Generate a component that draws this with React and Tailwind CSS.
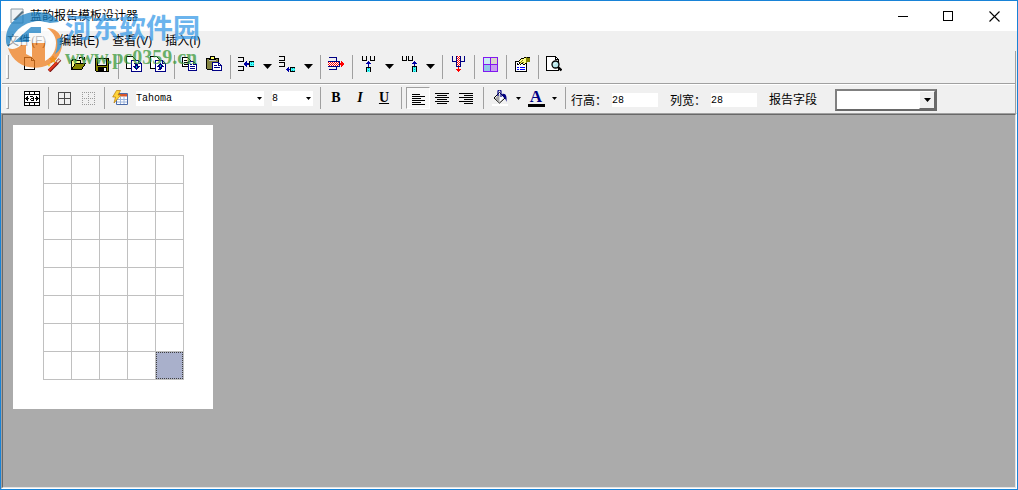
import { useState } from 'react';

function Svg({ children, smooth }) {
  return (
    <svg
      className="w-4 h-4 shrink-0"
      viewBox="0 0 16 16"
      fill="none"
      shapeRendering={smooth ? 'auto' : 'crispEdges'}
      aria-hidden="true"
    >
      {children}
    </svg>
  );
}

const icons = {
  new: (
    <Svg>
      <path d="M2.500 1.500h7l3 3v9h-10z" fill="#fff" stroke="#000" />
      <path d="M9.500 1.500v3h3" stroke="#000" />
    </Svg>
  ),
  wizard: (
    <Svg smooth>
      <path d="M3 15l8.500-8.500" stroke="#7b1010" strokeWidth="3.600" />
      <path d="M3 14.500l8-8" stroke="#e63a1e" strokeWidth="2.200" />
      <path d="M11 6.500l3-3" stroke="#7b1010" strokeWidth="3.600" />
      <path d="M11 6.300l2.700-2.700" stroke="#f8d8c0" strokeWidth="2" />
      <path d="M7 0l1 2.200 2.500.3-1.800 1.700.4 2.500L7 5.500 4.800 6.700l.4-2.500L3.500 2.500 6 2.200z" fill="#ffc20e" stroke="#d98a00" strokeWidth=".5" />
      <path d="M3 7l.6 1.400L5 9l-1.400.6L3 11l-.6-1.400L1 9l1.400-.6z" fill="#ffc20e" />
    </Svg>
  ),
  open: (
    <Svg>
      <path d="M1.500 13.500v-9h1v-1h3v1h5v3h-5l-4 6" fill="#ffff9c" stroke="#000" />
      <path d="M1.500 13.500l4-6h10l-4 6z" fill="#848400" stroke="#000" />
      <path d="M9.500 2.500v-1h3v1h1v1h1M14.500 1v3M12 3.500h3" stroke="#000" />
    </Svg>
  ),
  save: (
    <Svg>
      <path d="M1.500 2.500h13v13h-12l-1-1z" fill="#848400" stroke="#000" />
      <path d="M4 3h8v6H4z" fill="#f0f0f0" />
      <path d="M3.500 3v6.500h9V3" stroke="#000" />
      <path d="M4 11h9v4H4z" fill="#000" />
      <path d="M10 12h2v3h-2z" fill="#fff" />
    </Svg>
  ),
  load: (
    <Svg>
      <path d="M.5.5h6l3 3v9h-9z" fill="#fff" stroke="#000" />
      <path d="M5.500 4.500h7l3 3v8h-10z" fill="#fff" stroke="#000084" />
      <path d="M12.500 4.500v3h3" stroke="#000084" />
      <path d="M8 7h3v1h1v2h2v1h-1v1h-1v1h-1v1h-1v-1H9v-1H8v-1H7v-1h2V8H8z" fill="#000084" />
      <path d="M10 10h1v2h-1z" fill="#00c6c6" />
    </Svg>
  ),
  store: (
    <Svg>
      <path d="M.5.5h6l3 3v9h-9z" fill="#fff" stroke="#000" />
      <path d="M5.500 4.500h7l3 3v8h-10z" fill="#fff" stroke="#000084" />
      <path d="M12.500 4.500v3h3" stroke="#000084" />
      <path d="M10 7h1v1h1v1h1v1h1v1h-2v2h-1v1H8v-1h1v-2H7v-1h1V9h1V8h1z" fill="#000084" />
      <path d="M10 9h1v2h-1z" fill="#00c6c6" />
    </Svg>
  ),
  copy: (
    <Svg>
      <path d="M.5 1.500h5l3 3v6h-8z" fill="#fff" stroke="#000" />
      <path d="M2 4.500h3M2 6.500h4M2 8.500h4" stroke="#000" />
      <path d="M6.500 5.500h5l3 3v6h-8z" fill="#fff" stroke="#000084" />
      <path d="M11.500 5.500v3h3M8 8.500h2M8 10.500h5M8 12.500h5" stroke="#000084" />
    </Svg>
  ),
  paste: (
    <Svg>
      <path d="M.5 2.500h12v11H1.500l-1-1z" fill="#848442" stroke="#000" />
      <path d="M3.500 3.500v-1h1v-2h4v2h1v1z" fill="#ffff63" stroke="#000" />
      <path d="M3 4.500h7" stroke="#c6c6c6" />
      <path d="M6.500 6.500h6l3 3v5h-9z" fill="#fff" stroke="#000084" />
      <path d="M12.500 6.500v3h3M8 9.500h3M8 11.500h6" stroke="#000084" />
    </Svg>
  ),
  rowBefore: (
    <Svg>
      <path d="M0 1.500h5.500v4H0M0 10.500h5.500v4H0" stroke="#000" />
      <path d="M7 8h4" stroke="#0000a5" strokeWidth="2" />
      <path d="M6 7h1V6h1V5h1v6H8v-1H7V9H6z" fill="#0000a5" />
      <path d="M12 6h4v4h-4z" fill="#4ff" />
      <path d="M16 5.500h-4.500v5H16" stroke="#000" />
      <path d="M13.500 6v4M15.500 6v4" stroke="#00b0b0" strokeDasharray="1 1" />
    </Svg>
  ),
  rowAfter: (
    <Svg>
      <path d="M0 .5h5.500v4H0M0 6.500h5.500v4H0" stroke="#000" />
      <path d="M8 13.500h3" stroke="#0000a5" strokeWidth="1" />
      <path d="M7 13h1v-1h1v-1h1v5H9v-1H8v-1H7z" fill="#0000a5" />
      <path d="M12 12h4v3h-4z" fill="#4ff" />
      <path d="M16 11.500h-4.500v4H16" stroke="#000" />
      <path d="M13.500 12v3M15.500 12v3" stroke="#00b0b0" strokeDasharray="1 1" />
    </Svg>
  ),
  rowDelete: (
    <Svg>
      <path d="M1 1.500h7.500V5M1 13.500h7.500V11" stroke="#000084" />
      <path d="M0 6h11v4H0z" fill="#fff" />
      <path d="M0 6.500h11M0 8.500h11" stroke="#f00" strokeDasharray="1 1" />
      <path d="M1 7.500h10M1 9.500h10" stroke="#f00" strokeDasharray="1 1" />
      <path d="M0 5.500h11.500v5H0" stroke="#000084" />
      <path d="M12 7h1V5h1v1h1v1h1v2h-1v1h-1v1h-1V9h-1z" fill="#f00" />
    </Svg>
  ),
  colBefore: (
    <Svg>
      <path d="M2.500 0v4.500h4V0M10.500 0v4.500h4V0" stroke="#000" />
      <path d="M8 5h1v1h1v1h1v1H9v3H8V8H6V7h1V6h1z" fill="#0000a5" />
      <path d="M7 12h3v4H7z" fill="#4ff" />
      <path d="M6.500 16v-4.500h4V16" stroke="#000" />
      <path d="M8.500 12v4" stroke="#00b0b0" strokeDasharray="1 1" />
    </Svg>
  ),
  colAfter: (
    <Svg>
      <path d="M1.500 0v4.500h4V0M7.500 0v4.500h4V0" stroke="#000" />
      <path d="M13 5h1v1h1v1h1v1h-2v2h-1V8h-2V7h1V6h1z" fill="#0000a5" />
      <path d="M12 11h3v5h-3z" fill="#4ff" />
      <path d="M11.500 16v-5.500h4V16" stroke="#000" />
      <path d="M13.500 11v5" stroke="#00b0b0" strokeDasharray="1 1" />
    </Svg>
  ),
  colDelete: (
    <Svg>
      <path d="M2.500 0v5.500h4M14.500 0v5.500h-4" stroke="#000084" />
      <path d="M7 0h3v10H7z" fill="#fff" />
      <path d="M7.500 0v10M9.500 0v10" stroke="#f00" strokeDasharray="1 1" />
      <path d="M8.500 1v9" stroke="#f00" strokeDasharray="1 1" />
      <path d="M6.500 0v10.500h4V0" stroke="#000084" />
      <path d="M8 11h1v2h2v1h-1v1H9v1H8v-1H7v-1H6v-1h2z" fill="#f00" />
    </Svg>
  ),
  merge: (
    <Svg>
      <path d="M1 1h7v7H1z" fill="#c8ecf4" />
      <path d="M8 1h7v7H8z" fill="#dcd8c8" />
      <path d="M1 8h7v7H1z" fill="#90c8e8" />
      <path d="M8 8h7v7H8z" fill="#c8a0f0" />
      <path d="M1.500 1.500h14v14h-14zM8.500 1v15M1 8.500h15" stroke="#8218f0" />
    </Svg>
  ),
  properties: (
    <Svg>
      <path d="M1.500 5.500h11v10h-11z" fill="#fff" stroke="#000" />
      <path d="M3 8.500h2M3 7.500h1" stroke="#000" />
      <path d="M3 11.500h2M6 11.500h5M3 13.500h2M6 13.500h5" stroke="#00f" />
      <path d="M4.500 5.500l3-3h2l1-1h2v5l-2 2-3-1-1 1z" fill="#ffff84" stroke="#000" />
      <path d="M12 1h4v5h-3l-1 1z" fill="#848400" />
      <path d="M13 1.500h3v4" stroke="#000" />
      <path d="M6 6.500l3-2M8 6.500h2" stroke="#848400" />
    </Svg>
  ),
  preview: (
    <Svg>
      <path d="M.5.500h9l3 3v11H.500z" fill="#fff" stroke="#000" />
      <path d="M9.500.500v3h3" stroke="#000" />
      <g shapeRendering="auto">
        <circle cx="9.500" cy="8.500" r="3.500" fill="#b8e8ec" stroke="#000" strokeWidth="1.300" />
        <path d="M8 8.500l2-2" stroke="#fff" />
        <path d="M12 11l3.500 3.500" stroke="#000" strokeWidth="2.400" />
      </g>
    </Svg>
  ),
  autoFit: (
    <Svg>
      <path d="M.5 1.500h15v14H.500z" fill="#fff" stroke="#000" />
      <path d="M0 4.500h16M0 12.500h16M5.500 1v3M10.500 1v3M5.500 13v3M10.500 13v3" stroke="#000" />
      <path d="M1 8h1V7h1V6h1v2h1v1H4v2H3v-1H2V9H1zM15 8h-1V7h-1V6h-1v2h-1v1h1v2h1v-1h1V9h1z" fill="#000" />
      <path d="M6 6.500h3M9.500 7v4M7 8.500h2M6.500 9v1M7 10.500h2" stroke="#000" />
    </Svg>
  ),
  borders: (
    <Svg>
      <path d="M2.500 2.500h12v12h-12zM8.500 2v13M2 8.500h13" stroke="#4a4a4a" />
    </Svg>
  ),
  noBorders: (
    <Svg>
      <path d="M2 2.500h13M2 8.500h13M2 14.500h13M2.500 2v13M8.500 2v13M14.500 2v13" stroke="#9a9a9a" strokeDasharray="1 1" />
    </Svg>
  ),
  autoFormat: (
    <Svg smooth>
      <path d="M4.500 3.500h11v11h-11z" fill="#fff" stroke="#4a6aa8" />
      <path d="M5 4h10v2.500H5z" fill="#d8542c" />
      <path d="M5 9.500h10M5 12h10M8.500 6.500V14M12 6.500V14" stroke="#9cb4dc" />
      <path d="M4.500.500h4L6 5h3l-7 8 1.500-6H.700z" fill="#ffd43a" stroke="#b87800" strokeWidth=".7" />
    </Svg>
  ),
  alignLeft: (
    <Svg>
      <path d="M2 4.500h8M2 6.500h13M2 8.500h9M2 10.500h13M2 12.500h9M2 14.500h13" stroke="#000" />
    </Svg>
  ),
  alignCenter: (
    <Svg>
      <path d="M1 3.500h14M3 5.500h10M1 7.500h14M3 9.500h10M1 11.500h14M3 13.500h10" stroke="#000" />
    </Svg>
  ),
  alignRight: (
    <Svg>
      <path d="M1 3.500h14M6 5.500h9M1 7.500h14M6 9.500h9M1 11.500h14M6 13.500h9" stroke="#000" />
    </Svg>
  ),
  fill: (
    <Svg smooth>
      <path d="M2 8l5.500-5.500L13 8l-5.500 5z" fill="#fff" stroke="#000" />
      <path d="M3 8.500L7.500 4v8.500z" fill="#a8a8a8" />
      <path d="M6 6V1.500a1 1 0 0 1 3 0V7" stroke="#000084" strokeWidth="1.200" />
      <path d="M10 4c4-1 5 2 4.500 8-1-3-1.500-4-3.500-5z" fill="#000084" />
      <path d="M0 14h16v2H0z" fill="#fff" />
    </Svg>
  ),
};

function Caret({ small }) {
  return (
    <svg
      className={small ? 'w-[5px] h-[3px]' : 'w-[9px] h-[5px]'}
      viewBox="0 0 9 5"
      preserveAspectRatio="none"
      aria-hidden="true"
    >
      <path d="M0 0h9L4.500 5z" fill="#000" />
    </svg>
  );
}

function ToolButton({ icon, label, children }) {
  return (
    <button
      type="button"
      aria-label={label}
      title={label}
      className="w-6 h-[18px] shrink-0 flex items-center justify-center hover:bg-[#dcdcdc]"
    >
      {icon ? icons[icon] : children}
    </button>
  );
}

function MenuArrow({ label }) {
  return (
    <button type="button" aria-label={label} className="w-[17px] h-[18px] shrink-0 flex items-center justify-center pt-1 pl-[2px]">
      <Caret />
    </button>
  );
}

function Divider({ wide }) {
  return (
    <div className={`${wide ? 'w-[10px]' : 'w-2'} shrink-0 self-stretch flex justify-center`}>
      <div className="w-px bg-[#a0a0a0]" />
    </div>
  );
}

function Grip() {
  return <div className="w-[3px] shrink-0 self-stretch border-l border-l-white border-r border-b border-[#a0a0a0]" />;
}

const mainTools = [
  { icon: 'new', label: '新建' },
  { icon: 'wizard', label: '向导' },
  { icon: 'open', label: '打开' },
  { icon: 'save', label: '保存' },
  null,
  { icon: 'load', label: '导入' },
  { icon: 'store', label: '导出' },
  null,
  { icon: 'copy', label: '复制' },
  { icon: 'paste', label: '粘贴' },
  null,
  { icon: 'rowBefore', label: '插入行', menu: true },
  { icon: 'rowAfter', label: '追加行', menu: true },
  null,
  { icon: 'rowDelete', label: '删除行' },
  null,
  { icon: 'colBefore', label: '插入列', menu: true },
  { icon: 'colAfter', label: '追加列', menu: true },
  null,
  { icon: 'colDelete', label: '删除列' },
  null,
  { icon: 'merge', label: '合并单元格' },
  null,
  { icon: 'properties', label: '属性' },
  null,
  { icon: 'preview', label: '预览' },
];

const menus = ['文件(F)', '编辑(E)', '查看(V)', '插入(I)'];

function TitleBar() {
  return (
    <header className="h-[30px] shrink-0 bg-white flex items-center justify-between">
      <div className="flex items-center gap-1 pl-[9px]">
        <svg className="w-4 h-4" viewBox="0 0 16 16" aria-hidden="true">
          <path d="M1 1h12v14H1z" fill="#eef2f4" stroke="#8a9aa4" />
          <path d="M3 12l9-9 2 1-8 8z" fill="#5b7484" />
        </svg>
        <h1 className="text-xs">蓝韵报告模板设计器</h1>
      </div>
      <div className="flex">
        <button type="button" aria-label="最小化" className="w-[45px] h-[29px] flex items-center justify-center">
          <svg className="w-[11px] h-[11px]" viewBox="0 0 11 11" shapeRendering="crispEdges">
            <path d="M0 5.500h10" stroke="#000" />
          </svg>
        </button>
        <button type="button" aria-label="最大化" className="w-[45px] h-[29px] flex items-center justify-center">
          <svg className="w-[11px] h-[11px]" viewBox="0 0 11 11" shapeRendering="crispEdges">
            <path d="M.5.500h9v9h-9z" fill="none" stroke="#000" />
          </svg>
        </button>
        <button type="button" aria-label="关闭" className="w-[46px] h-[29px] flex items-center justify-center">
          <svg className="w-[11px] h-[11px]" viewBox="0 0 11 11">
            <path d="M.5.500l10 10M10.500.500l-10 10" stroke="#000" strokeWidth="1.100" />
          </svg>
        </button>
      </div>
    </header>
  );
}

function MainToolbar() {
  return (
    <div className="h-8 flex items-start pl-1 pt-1 pb-1">
      <Grip />
      <div className="flex items-start self-stretch pl-[9px]">
        {mainTools.map((tool, i) =>
          tool ? (
            <div key={tool.icon} className="flex">
              <ToolButton icon={tool.icon} label={tool.label} />
              {tool.menu && <MenuArrow label={tool.label + '菜单'} />}
            </div>
          ) : (
            <Divider key={i} />
          )
        )}
      </div>
    </div>
  );
}

function FontBox({ label, value, width }) {
  return (
    <div className={`${width} h-[15px] shrink-0 flex items-center bg-white`}>
      <input
        aria-label={label}
        defaultValue={value}
        className="flex-1 min-w-0 h-[15px] font-['Liberation_Mono',monospace] text-[10px] outline-none"
      />
      <button type="button" aria-label={label + '列表'} className="w-[9px] h-[15px] flex items-center justify-center">
        <Caret small />
      </button>
    </div>
  );
}

function SizeField({ id, label }) {
  return (
    <div className="flex items-center gap-[5px]">
      <label htmlFor={id} className="w-9 pt-px whitespace-nowrap">{label}</label>
      <input
        id={id}
        defaultValue="28"
        className="w-[46px] h-[14px] bg-white font-['Liberation_Mono',monospace] text-[10px] outline-none"
      />
    </div>
  );
}

function FormatToolbar() {
  const [align, setAlign] = useState('alignLeft');

  return (
    <div className="h-7 flex items-center pl-1 pt-[2px] pb-1 text-xs">
      <Grip />
      <div className="flex items-center self-stretch pl-[11px]">
        <ToolButton icon="autoFit" label="自动调整" />
        <Divider />
        <ToolButton icon="borders" label="边框" />
        <ToolButton icon="noBorders" label="无边框" />
        <Divider />
        <ToolButton icon="autoFormat" label="自动套用格式" />
        <div className="flex gap-2 pl-1 pr-[3px]">
          <FontBox label="字体" value="Tahoma" width="w-[128px]" />
          <FontBox label="字号" value="8" width="w-[41px]" />
        </div>
        <Divider />
        <ToolButton label="粗体">
          <span className="font-['Liberation_Serif',serif] font-black text-[14px] leading-4">B</span>
        </ToolButton>
        <ToolButton label="斜体">
          <span className="font-['Liberation_Serif',serif] font-bold italic text-[14px] leading-4">I</span>
        </ToolButton>
        <ToolButton label="下划线">
          <span className="font-['Liberation_Serif',serif] font-bold underline text-[14px] leading-4">U</span>
        </ToolButton>
        <Divider wide />
        {['alignLeft', 'alignCenter', 'alignRight'].map((name) => (
          <button
            key={name}
            type="button"
            aria-label={name}
            aria-pressed={align === name}
            onClick={() => setAlign(name)}
            className={`w-6 h-[22px] shrink-0 flex items-center justify-center border ${
              align === name ? 'bg-[#f8f8f8] border-[#a0a0a0] border-r-white border-b-white' : 'border-transparent'
            }`}
          >
            {icons[name]}
          </button>
        ))}
        <Divider wide />
        <ToolButton icon="fill" label="填充颜色" />
        <button type="button" aria-label="填充颜色列表" className="w-3 h-[18px] flex items-center justify-center">
          <Caret small />
        </button>
        <ToolButton label="字体颜色">
          <span className="w-[17px] h-[17px] flex items-center justify-center border-b-3 border-black font-['Liberation_Serif',serif] font-bold text-[17px] leading-4 text-[#000084]">
            A
          </span>
        </ToolButton>
        <button type="button" aria-label="字体颜色列表" className="w-3 h-[18px] flex items-center justify-center">
          <Caret small />
        </button>
        <Divider wide />
        <div className="flex items-center pt-1 pl-px">
          <div className="flex gap-3">
            <SizeField id="row-height" label="行高：" />
            <SizeField id="col-width" label="列宽：" />
          </div>
          <label htmlFor="report-field" className="pl-3 pr-[18px] whitespace-nowrap">报告字段</label>
          <div className="relative w-[102px] h-[22px]">
            <select
              id="report-field"
              className="block w-full h-full appearance-none bg-white border-2 border-[#696969] border-t-[#808080] border-l-[#808080] outline-none"
            >
              <option></option>
            </select>
            <span className="absolute right-[2px] top-[2px] w-4 h-[18px] flex items-center justify-center bg-[#f0f0f0] border border-white border-r-[#696969] border-b-[#696969] pointer-events-none">
              <svg className="w-[7px] h-1" viewBox="0 0 7 4" aria-hidden="true">
                <path d="M0 0h7L3.500 4z" fill="#000" />
              </svg>
            </span>
          </div>
        </div>
      </div>
    </div>
  );
}

function ReportPage() {
  const [selected, setSelected] = useState('7-4');

  return (
    <div className="w-[200px] h-[284px] bg-white pl-[30px] pt-[30px]">
      <table className="table-fixed w-[141px] border-separate border-spacing-0 border-t border-l border-[#c0c0c0]">
        <tbody>
          {Array.from({ length: 8 }, (_, row) => (
            <tr key={row}>
              {Array.from({ length: 5 }, (_, col) => {
                const key = `${row}-${col}`;
                return (
                  <td
                    key={key}
                    onClick={() => setSelected(key)}
                    className="w-7 h-7 p-0 border-r border-b border-[#c0c0c0]"
                  >
                    {selected === key && (
                      <div className="w-[27px] h-[27px] bg-[#a9b0cb] border border-dotted border-[#404040]" />
                    )}
                  </td>
                );
              })}
            </tr>
          ))}
        </tbody>
      </table>
    </div>
  );
}

function Watermark() {
  return (
    <div className="absolute left-1 top-2 flex items-start gap-[2px] opacity-75 pointer-events-none">
      <svg className="w-[58px] h-[60px]" viewBox="0 0 58 60" aria-hidden="true">
        <path d="M1 32C0 15 14 3 32 3c11 0 18 4 22 10l-9 1-11-2C22 13 8 20 4 38c-2-1-3-3-3-6z" fill="#1a80c4" />
        <path d="M4 38C8 20 20 13 34 12l15 3 4 12-6 22-17 7z" fill="#fff" fillOpacity=".85" />
        <path d="M9 33l17-15h10v6H24v9z" fill="#1a80c4" />
        <path d="M3 39c4 2 9 1 13-3h5v9l6 3V34h13v18c7-4 11-10 11-18 0-6-3-11-9-15 8 0 14 5 15 14 1 12-8 23-20 25C21 61 8 54 3 39z" fill="#f08020" />
        <path d="M28 27h16v-5l6 8-6 7v-5H28z" fill="#fff" />
        <path d="M52 30l5-2c1 8-2 14-7 17 2-4 3-9 2-15z" fill="#1a80c4" />
      </svg>
      <div className="pt-1 whitespace-nowrap">
        <div className="text-[27px] leading-8 font-bold text-[#3a9be8]">河东软件园</div>
        <div className="text-[20px] leading-6 font-bold font-['Liberation_Serif',serif] text-[#3c9a3c]">www.pc0359.cn</div>
      </div>
    </div>
  );
}

export default function App() {
  return (
    <div className="relative h-screen flex flex-col bg-[#f0f0f0] border border-[#1883d7] text-black overflow-hidden font-['Liberation_Sans','Noto_Sans_CJK_SC',sans-serif]">
      <TitleBar />
      <nav className="h-5 shrink-0 flex items-center gap-[13px] pl-[6px] text-xs">
        {menus.map((menu) => (
          <button key={menu} type="button" className="whitespace-nowrap">{menu}</button>
        ))}
      </nav>
      <div className="shrink-0 pl-px mr-px border-r border-[#a0a0a0]">
        <MainToolbar />
        <div className="h-[2px] bg-white border-t border-[#a0a0a0]" />
        <FormatToolbar />
      </div>
      <main className="flex-1 min-h-0 flex flex-col border border-t-[#a0a0a0] border-l-[#a0a0a0] border-white">
        <div className="flex-1 min-h-0 overflow-hidden bg-[#ababab] border border-[#e3e3e3] border-t-[#696969] border-l-[#696969] p-[10px]">
          <ReportPage />
        </div>
      </main>
      <Watermark />
    </div>
  );
}
